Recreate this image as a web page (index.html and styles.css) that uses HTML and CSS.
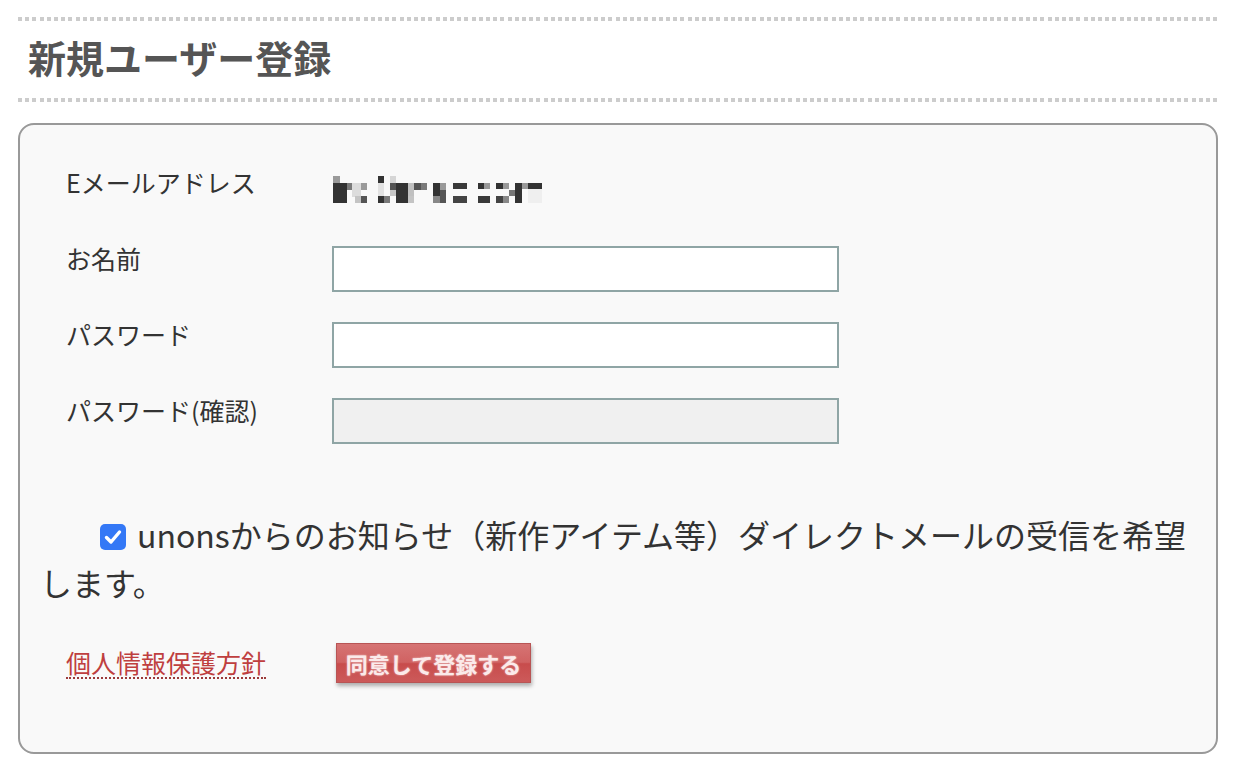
FILE: index.html
```html
<!DOCTYPE html>
<html lang="ja">
<head>
    <meta charset="UTF-8">
    <meta name="viewport" content="width=device-width, initial-scale=1.0">
    <title>新規ユーザー登録</title>
    <link rel="stylesheet" href="styles.css">
</head>
<body>

    <div class="page">
        <h1 class="title">新規ユーザー登録</h1>

        <form class="box" id="signupForm">
            <div class="row">
                <span class="label">Eメールアドレス</span>
                <!-- mosaic over the address -->
                <svg class="mosaic" width="212" height="28" viewBox="0 0 212 28">
                    <rect x="0" y="0" width="7" height="7" fill="#9a9a9a"/>
                    <rect x="0" y="7" width="14" height="20" fill="#333"/>
                    <rect x="14" y="7" width="5" height="7" fill="#7a7a7a"/>
                    <rect x="19" y="7" width="9" height="14" fill="#dcdcdc"/>
                    <rect x="28" y="7" width="6" height="7" fill="#9a9a9a"/>
                    <rect x="28" y="20" width="6" height="7" fill="#555"/>
                    <rect x="22" y="20" width="6" height="7" fill="#c4c4c4"/>
                    <rect x="45" y="0" width="6" height="7" fill="#333"/>
                    <rect x="45" y="7" width="6" height="13" fill="#e2e2e2"/>
                    <rect x="45" y="20" width="6" height="7" fill="#333"/>
                    <rect x="51" y="20" width="6" height="7" fill="#7a7a7a"/>
                    <rect x="57" y="0" width="6" height="7" fill="#d6d6d6"/>
                    <rect x="57" y="7" width="6" height="7" fill="#555"/>
                    <rect x="63" y="7" width="12" height="20" fill="#333"/>
                    <rect x="57" y="14" width="6" height="6" fill="#c6c6c6"/>
                    <rect x="75" y="7" width="6" height="13" fill="#c0c0c0"/>
                    <rect x="75" y="20" width="6" height="7" fill="#c4c4c4"/>
                    <rect x="81" y="7" width="7" height="7" fill="#555"/>
                    <rect x="88" y="7" width="6" height="7" fill="#7a7a7a"/>
                    <rect x="100" y="7" width="7" height="13" fill="#333"/>
                    <rect x="100" y="20" width="7" height="7" fill="#888"/>
                    <rect x="107" y="7" width="6" height="7" fill="#999"/>
                    <rect x="107" y="14" width="6" height="13" fill="#555"/>
                    <rect x="120" y="7" width="14" height="6" fill="#3a3a3a"/>
                    <rect x="120" y="20" width="14" height="7" fill="#444"/>
                    <rect x="145" y="7" width="6" height="6" fill="#333"/>
                    <rect x="151" y="7" width="6" height="6" fill="#999"/>
                    <rect x="145" y="20" width="12" height="7" fill="#3a3a3a"/>
                    <rect x="163" y="7" width="7" height="6" fill="#333"/>
                    <rect x="170" y="7" width="6" height="6" fill="#999"/>
                    <rect x="163" y="20" width="7" height="7" fill="#444"/>
                    <rect x="170" y="20" width="6" height="7" fill="#888"/>
                    <rect x="176" y="14" width="6" height="6" fill="#777"/>
                    <rect x="182" y="7" width="7" height="20" fill="#333"/>
                    <rect x="189" y="7" width="6" height="6" fill="#999"/>
                    <rect x="195" y="7" width="14" height="6" fill="#333"/>
                    <rect x="195" y="13" width="14" height="14" fill="#efefef"/>
                </svg>
            </div>
            <div class="row">
                <label class="label" for="name">お名前</label>
                <input class="field" type="text" id="name">
            </div>
            <div class="row">
                <label class="label" for="password">パスワード</label>
                <input class="field" type="password" id="password">
            </div>
            <div class="row">
                <label class="label" for="password2">パスワード(確認)</label>
                <input class="field field-off" type="password" id="password2" disabled>
            </div>

            <p class="notice">
                <label for="dm"><input class="check" type="checkbox" id="dm" checked><span class="tick"><svg width="26" height="26" viewBox="0 0 26 26"><rect x="0" y="0" width="26" height="26" rx="5" fill="#3478f6"/><path d="M6.5 13.5l4.5 4.5 8.5-10" fill="none" stroke="#fff" stroke-width="3.4" stroke-linecap="round" stroke-linejoin="round"/></svg></span>unonsからのお知らせ（新作アイテム等）ダイレクトメールの受信を希望します。</label>
            </p>

            <div class="actions">
                <a class="policy" href="#">個人情報保護方針</a>
                <button class="submit" type="button">同意して登録する</button>
            </div>
        </form>
    </div>

</body>
</html>
```

FILE: styles.css
```css
body {
    margin: 0;
    background: #fff;
    font-family: "Noto Sans CJK JP", "Noto Sans", sans-serif;
    color: #333;
}
.page {
    width: 1200px;
    margin: 17px 0 0 18px;
}
.title {
    margin: 0;
    padding: 11px 10px 17px;
    font-size: 38px;
    line-height: 57px;
    font-weight: 700;
    color: #555;
    background-image:
        repeating-linear-gradient(90deg, #ccc 0 4px, transparent 4px 7.2px),
        repeating-linear-gradient(90deg, #ccc 0 4px, transparent 4px 7.2px);
    background-size: 100% 4px, 100% 4px;
    background-position: top left, bottom left;
    background-repeat: no-repeat;
}
.box {
    box-sizing: border-box;
    margin-top: 21px;
    height: 631px;
    padding: 39px 20px 0;
    background: #f9f9f9;
    border: 2px solid #999;
    border-radius: 16px;
}
.row {
    display: grid;
    grid-template-columns: 266px 507px;
    align-items: start;
    min-height: 52px;
    margin-bottom: 24px;
    padding-left: 26px;
}
.label {
    font-size: 25px;
    line-height: 37px;
}
.mosaic {
    display: block;
    margin-top: 12px;
    margin-left: 1px;
}
.field {
    box-sizing: border-box;
    width: 507px;
    height: 46px;
    margin: 6px 0 0;
    border: 2px solid #8fa5a5;
    background: #fff;
    font-size: 22px;
    padding: 0 8px;
}
.field:focus {
    outline: none;
    border-color: #6f8f8f;
}
.field-off {
    background: #f0f0f0;
}
.notice {
    margin: 66px 0 0;
    font-size: 32px;
    line-height: 48px;
    text-indent: 60px;
}
.check {
    display: none;
}
.tick {
    display: inline-block;
    width: 26px;
    height: 26px;
    margin-right: 11px;
    vertical-align: -2px;
    text-indent: 0;
}
.tick svg {
    display: block;
}
.actions {
    display: grid;
    grid-template-columns: 270px auto;
    justify-content: start;
    align-items: center;
    margin-top: 37px;
    padding-left: 26px;
}
.policy {
    justify-self: start;
    font-size: 25px;
    line-height: 30px;
    color: #bf3f3f;
    text-decoration: none;
    border-bottom: 2px dotted #9b3a3a;
}
.submit {
    width: 195px;
    height: 40px;
    padding: 0;
    border: 1px solid #b85555;
    background: linear-gradient(#d67474, #d06262 48%, #c84c4c 52%, #cc5a5a);
    color: #fbeaea;
    font-family: "Noto Sans CJK JP", sans-serif;
    font-size: 22px;
    font-weight: 700;
    text-shadow: 0 0 2px rgba(255, 255, 255, 0.7);
    box-shadow: 1px 3px 4px rgba(0, 0, 0, 0.3);
    cursor: pointer;
}
.submit:hover {
    background: #c44;
}
```
